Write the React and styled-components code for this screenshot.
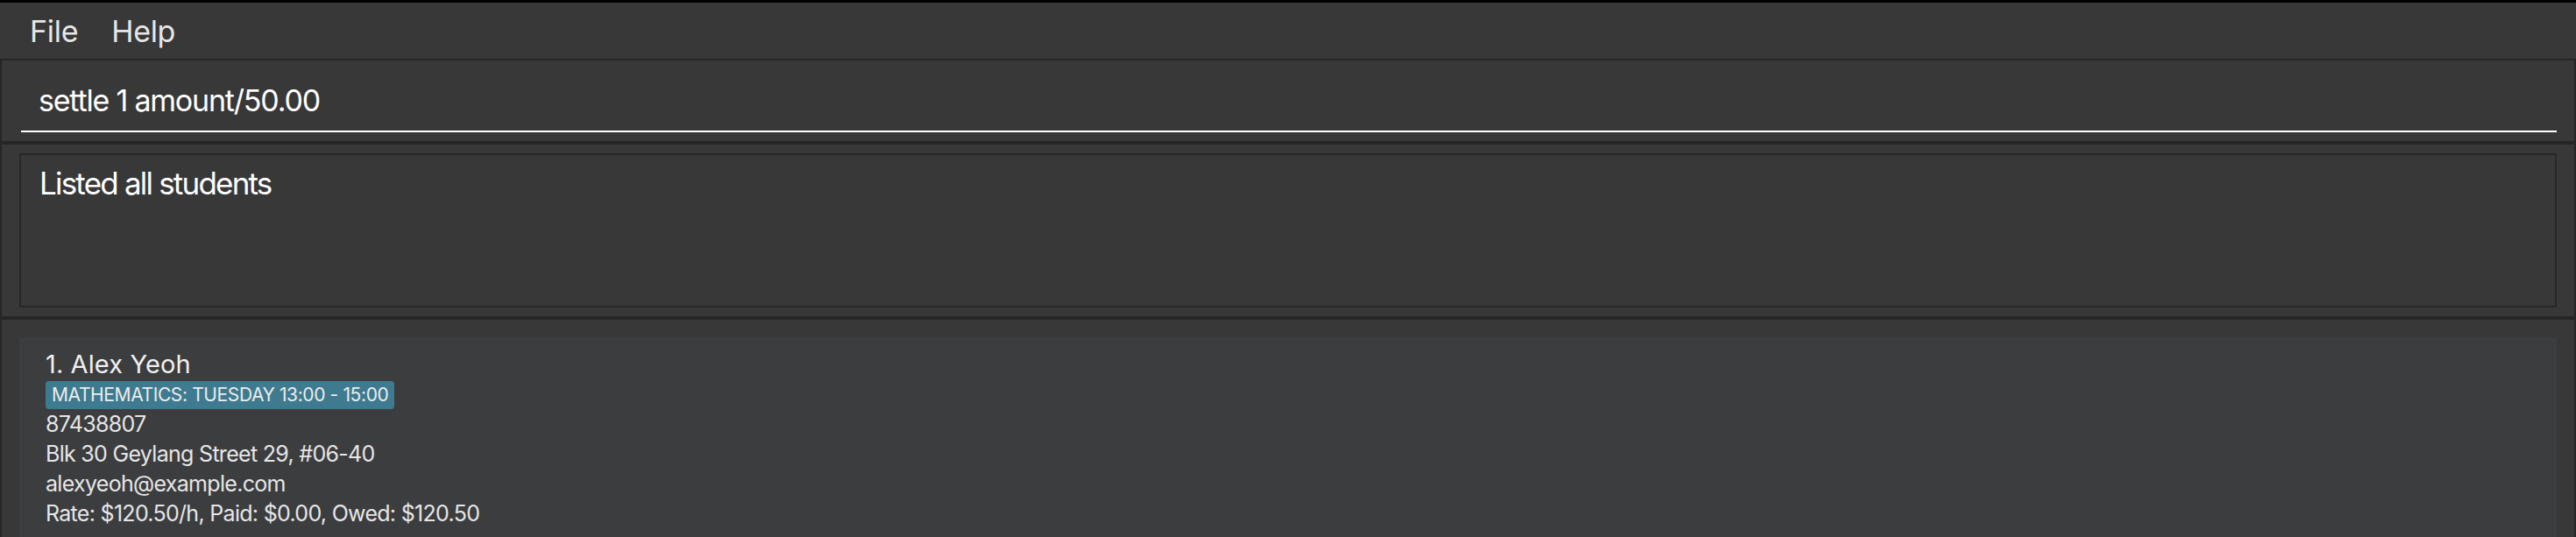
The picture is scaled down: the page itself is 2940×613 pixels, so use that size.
import React from "react";
import styled, { createGlobalStyle } from "styled-components";

const GlobalStyle = createGlobalStyle`
  html, body {
    margin: 0;
    padding: 0;
    background: #383838;
  }
  * { box-sizing: border-box; }
`;

const FONT = `Inter, "Noto Sans", "Liberation Sans", sans-serif`;

const Window = styled.div`
  width: 2940px;
  height: 613px;
  overflow: hidden;
  background: #383838;
  border-top: 3px solid #000;
  display: flex;
  flex-direction: column;
  font-family: ${FONT};
`;

const MenuBar = styled.div`
  height: 64px;
  flex-shrink: 0;
  display: flex;
  align-items: center;
  padding-left: 34px;
  gap: 38px;
`;

const MenuItem = styled.span`
  font-size: 34px;
  letter-spacing: -0.3px;
  color: #e6e6e6;
`;

const Panel = styled.div`
  flex-shrink: 0;
  border: 2px solid #262626;
  padding: ${(p) => p.$pad};
`;

const CommandInput = styled.input`
  display: block;
  width: 100%;
  height: 82px;
  padding: 11px 0 0 20px;
  border: none;
  border-bottom: 2px solid #ffffff;
  background: transparent;
  color: #ffffff;
  font-family: ${FONT};
  font-size: 34px;
  letter-spacing: -1.2px;
  outline: none;
`;

const ResultBox = styled.div`
  height: 176px;
  border: 2px solid #282828;
  padding: 11px 21px;
  color: #ffffff;
  font-size: 35px;
  letter-spacing: -1.8px;
`;

const ListPanel = styled.div`
  flex: 1;
  border: 2px solid #262626;
  border-bottom: none;
  padding: 20px 20px 0 20px;
`;

const Card = styled.div`
  background: #3c3d3f;
  padding: 12px 30px 20px;
  display: flex;
  flex-direction: column;
  align-items: flex-start;
`;

const Name = styled.div`
  font-size: 29px;
  line-height: 38px;
  letter-spacing: 0.1px;
  color: #f0f0f0;
`;

const Tag = styled.span`
  font-size: 21px;
  line-height: 32px;
  height: 32px;
  padding: 0 7px;
  letter-spacing: -0.38px;
  background: #3f7b90;
  border-radius: 4px;
  color: #ececec;
`;

const Detail = styled.div`
  font-size: 25px;
  line-height: 34px;
  letter-spacing: -0.7px;
  color: #e6e6e6;
`;

const person = {
  name: "1. Alex Yeoh",
  tags: ["MATHEMATICS: TUESDAY 13:00 - 15:00"],
  details: [
    "87438807",
    "Blk 30 Geylang Street 29, #06-40",
    "alexyeoh@example.com",
    "Rate: $120.50/h, Paid: $0.00, Owed: $120.50",
  ],
};

export default function App() {
  return (
    <>
      <GlobalStyle />
      <Window>
        <MenuBar>
          <MenuItem>File</MenuItem>
          <MenuItem>Help</MenuItem>
        </MenuBar>
        <Panel $pad="0 20px 10px 22px">
          <CommandInput value="settle 1 amount/50.00" readOnly />
        </Panel>
        <Panel $pad="10px 20px">
          <ResultBox>Listed all students</ResultBox>
        </Panel>
        <ListPanel>
          <Card>
            <Name>{person.name}</Name>
            {person.tags.map((t) => (
              <Tag key={t}>{t}</Tag>
            ))}
            {person.details.map((d) => (
              <Detail key={d}>{d}</Detail>
            ))}
          </Card>
        </ListPanel>
      </Window>
    </>
  );
}
